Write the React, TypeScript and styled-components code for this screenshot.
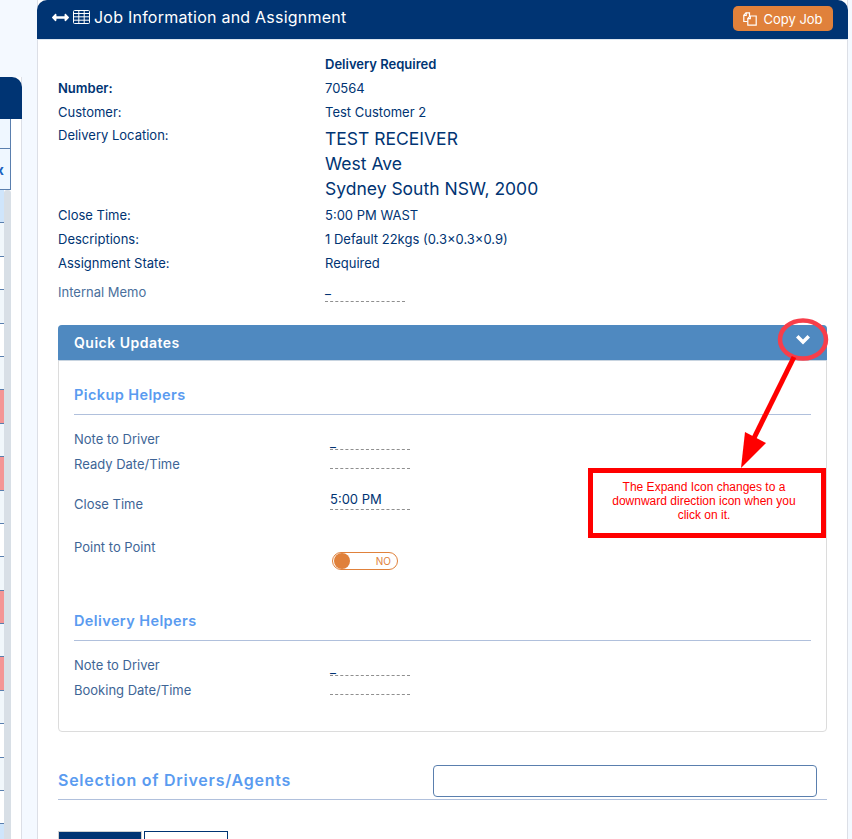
import styled, { createGlobalStyle } from 'styled-components';
import { FaArrowsAltH } from 'react-icons/fa';

const GlobalStyle = createGlobalStyle`
  html, body {
    margin: 0;
    padding: 0;
    height: 100%;
    overflow: hidden;
    background: #f4f9ff;
  }
  * { box-sizing: border-box; }
`;

const Page = styled.div`
  position: relative;
  display: flex;
  width: 852px;
  height: 839px;
  overflow: hidden;
  font-family: Inter, "Noto Sans", sans-serif;
  color: #003473;
`;

const SidePanel = styled.div`
  flex: 0 0 22px;
  margin-top: 77px;
  margin-right: 15px;
  background: #fff;
  border-right: 1px solid #dcdfe6;
`;

const SideHeader = styled.div`
  height: 42px;
  margin-right: -1px;
  background: #003473;
  border-top-right-radius: 10px;
`;

const SideHeadCell = styled.div<{ $height: number }>`
  display: flex;
  justify-content: flex-end;
  align-items: center;
  width: 11px;
  height: ${p => p.$height}px;
  padding-right: 6px;
  overflow: hidden;
  background: #eff7ff;
  border-right: 1px solid #5a7fae;
  border-bottom: 1px solid #5a7fae;
  font-size: 14px;
  font-weight: 700;
  color: #1a62c0;
  white-space: nowrap;
`;

const SideBody = styled.div`
  display: flex;
  width: 11px;
`;

const SideRows = styled.div`
  flex: 0 0 4px;
`;

const SideRow = styled.div<{ $kind: string }>`
  height: 33.4px;
  border-bottom: 1px solid #5a7fae;
  background: ${p =>
    p.$kind === 'blue' ? '#cfe5fb' : p.$kind === 'red' ? '#f49595' : p.$kind === 'tint' ? '#f1f7fb' : '#fff'};
`;

const SideScroll = styled.div`
  flex: 0 0 7px;
  height: 660px;
  background: #d8dfe6;
  border-radius: 3px 3px 0 0;
`;

const Panel = styled.div`
  flex: 0 0 811px;
  height: 900px;
  background: #fff;
  border-left: 1px solid #dcdfe6;
  border-right: 1px solid #dcdfe6;
`;

const PanelHeader = styled.div`
  display: flex;
  align-items: center;
  justify-content: space-between;
  height: 40px;
  margin: 0 -1px;
  padding: 0 15px 2px 15px;
  background: #003473;
  border-radius: 10px 10px 0 0;
  border-bottom: 1px solid #dde6f0;
  color: #fff;
`;

const PanelTitle = styled.div`
  display: flex;
  align-items: center;
  gap: 4px;
  margin-bottom: 3px;
  font-size: 16px;
  font-weight: 400;
  letter-spacing: 0.23px;
  svg { flex: none; }
`;

const CopyButton = styled.button`
  display: flex;
  align-items: center;
  justify-content: center;
  gap: 6px;
  width: 100px;
  height: 25px;
  padding: 0;
  border: none;
  border-radius: 5px;
  background: #e0813b;
  color: #fff;
  font-family: inherit;
  font-size: 13px;
`;

const PanelBody = styled.div`
  padding: 12px 20px 0 20px;
`;

const InfoGrid = styled.div`
  display: grid;
  grid-template-columns: 267px 1fr;
  font-size: 13px;
`;

const InfoLabel = styled.div<{ $bold?: boolean }>`
  min-height: 24px;
  line-height: 24px;
  font-weight: ${p => (p.$bold ? 600 : 400)};
`;

const LocationLabel = styled(InfoLabel)`
  margin-top: -1px;
`;

const InfoValue = styled.div<{ $bold?: boolean }>`
  min-height: 24px;
  line-height: 24px;
  font-weight: ${p => (p.$bold ? 600 : 400)};
`;

const AddressValue = styled.div`
  margin: 2px 0;
  font-size: 17.5px;
  line-height: 25px;
`;

const MemoLabel = styled.div`
  padding-top: 5px;
  line-height: 24px;
  font-size: 13px;
  color: #4a6f9c;
`;

const MemoValue = styled.div`
  width: 80px;
  height: 26px;
  margin-top: 1px;
  line-height: 27px;
  font-size: 13px;
  border-bottom: 1px dashed #8f8f8f;
`;

const Card = styled.div`
  height: 407px;
  margin-top: 21px;
  border: 1px solid #dcdcdc;
  border-radius: 4px;
`;

const CardHeader = styled.div`
  height: 36px;
  margin: -1px -1px 0 -1px;
  padding-left: 16px;
  line-height: 36px;
  background: #4f89c0;
  border-bottom: 1px solid #c8d4e0;
  border-radius: 4px 4px 0 0;
  color: #fff;
  font-size: 14px;
  font-weight: 600;
  letter-spacing: 0.5px;
`;

const CardBody = styled.div`
  padding: 0 15px;
`;

const SectionHeading = styled.div<{ $top: number }>`
  margin-top: ${p => p.$top}px;
  margin-bottom: 15px;
  padding-bottom: 9px;
  line-height: 20px;
  font-size: 14.5px;
  font-weight: 600;
  letter-spacing: 0.4px;
  color: #5a9bf0;
  border-bottom: 1px solid #b0c0dc;
`;

const FieldRow = styled.div<{ $height: number }>`
  display: grid;
  grid-template-columns: 256px 80px;
  height: ${p => p.$height}px;
  font-size: 13px;
`;

const FieldLabel = styled.div`
  line-height: 18px;
  color: #3e6596;
`;

const FieldInput = styled.div<{ $height: number; $tall?: boolean }>`
  display: flex;
  align-items: flex-end;
  height: ${p => p.$height}px;
  border-bottom: 1px dashed #8f8f8f;
  font-size: 13px;
  line-height: ${p => (p.$tall ? 20 : 14)}px;
`;

const Toggle = styled.div`
  display: flex;
  align-items: center;
  justify-content: space-between;
  width: 66px;
  height: 18px;
  margin: 14px 0 0 2px;
  padding: 0 6px 0 1px;
  background: #fff;
  border: 1px solid #e0813b;
  border-radius: 9px;
  color: #e0813b;
  font-size: 10px;
`;

const ToggleKnob = styled.span`
  width: 16px;
  height: 16px;
  border-radius: 50%;
  background: #e0813b;
`;

const SelectionRow = styled.div`
  display: flex;
  align-items: center;
  justify-content: space-between;
  height: 35px;
  margin-top: 33px;
  padding-right: 10px;
  border-bottom: 1px solid #b0c0dc;
`;

const SelectionTitle = styled.div`
  padding-bottom: 4px;
  font-size: 16px;
  font-weight: 600;
  letter-spacing: 0.75px;
  color: #5a9bf0;
`;

const SelectionInput = styled.div`
  width: 384px;
  height: 32px;
  margin-bottom: 2px;
  border: 1px solid #5a7fae;
  border-radius: 4px;
  background: #fff;
`;

const Tabs = styled.div`
  display: flex;
  gap: 2px;
  margin-top: 31px;
`;

const Tab = styled.div<{ $active?: boolean }>`
  width: 84px;
  height: 30px;
  background: ${p => (p.$active ? '#003473' : '#fff')};
  border: 1px solid ${p => (p.$active ? '#cfcfcf' : '#003473')};
`;

const CalloutArt = styled.svg`
  position: absolute;
  left: 0;
  top: 0;
  pointer-events: none;
`;

const CalloutBox = styled.div`
  position: absolute;
  left: 588px;
  top: 468px;
  display: flex;
  align-items: center;
  justify-content: center;
  width: 238px;
  height: 70px;
  padding: 0 21px 4px 15px;
  background: #fff;
  border: 5px solid #ff0000;
  color: #ff0000;
  font-family: "Liberation Sans", Arial, sans-serif;
  font-size: 12px;
  line-height: 14px;
  text-align: center;
`;

const rowKinds = [
  'blue', 'tint', 'white', 'tint', 'white', 'tint', 'red', 'tint', 'red', 'tint',
  'white', 'tint', 'red', 'tint', 'red', 'tint', 'white', 'tint', 'white', 'blue',
];

const CopyIcon = () => (
  <svg width="14" height="14" viewBox="0 0 14 14" fill="none" stroke="#fff" strokeWidth="1.2">
    <path d="M4.5 9.5H0.8V3.2L3 0.8H6.5V4" />
    <path d="M0.8 3.5H3.2V0.8" />
    <path d="M4.8 13.2V6.4L7 4H13.2V13.2Z" />
    <path d="M4.8 6.6H7.3V4" />
  </svg>
);

const TableIcon = () => (
  <svg width="17" height="14" viewBox="0 0 17 14" fill="none" stroke="#fff" strokeWidth="1">
    <rect x="0.5" y="0.5" width="16" height="13" rx="1" />
    <path d="M0.5 3.5H16.5M0.5 6.8H16.5M0.5 10.2H16.5M5.8 0.5V13.5M11.2 0.5V13.5" />
  </svg>
);

export default function App() {
  return (
    <>
      <GlobalStyle />
      <Page>
        <SidePanel>
          <SideHeader />
          <SideHeadCell $height={30} />
          <SideHeadCell $height={41}>Box</SideHeadCell>
          <SideBody>
            <SideRows>
              {rowKinds.map((kind, i) => (
                <SideRow key={i} $kind={kind} />
              ))}
            </SideRows>
            <SideScroll />
          </SideBody>
        </SidePanel>

        <Panel>
          <PanelHeader>
            <PanelTitle>
              <FaArrowsAltH size={17} />
              <TableIcon />
              <span>Job Information and Assignment</span>
            </PanelTitle>
            <CopyButton>
              <CopyIcon />
              Copy Job
            </CopyButton>
          </PanelHeader>

          <PanelBody>
            <InfoGrid>
              <InfoLabel />
              <InfoValue $bold>Delivery Required</InfoValue>
              <InfoLabel $bold>Number:</InfoLabel>
              <InfoValue>70564</InfoValue>
              <InfoLabel>Customer:</InfoLabel>
              <InfoValue>Test Customer 2</InfoValue>
              <LocationLabel>Delivery Location:</LocationLabel>
              <AddressValue>
                TEST RECEIVER
                <br />
                West Ave
                <br />
                Sydney South NSW, 2000
              </AddressValue>
              <InfoLabel>Close Time:</InfoLabel>
              <InfoValue>5:00 PM WAST</InfoValue>
              <InfoLabel>Descriptions:</InfoLabel>
              <InfoValue>1 Default 22kgs (0.3×0.3×0.9)</InfoValue>
              <InfoLabel>Assignment State:</InfoLabel>
              <InfoValue>Required</InfoValue>
              <MemoLabel>Internal Memo</MemoLabel>
              <MemoValue>_</MemoValue>
            </InfoGrid>

            <Card>
              <CardHeader>Quick Updates</CardHeader>
              <CardBody>
                <SectionHeading $top={24}>Pickup Helpers</SectionHeading>
                <FieldRow $height={25}>
                  <FieldLabel>Note to Driver</FieldLabel>
                  <FieldInput $height={20}>_</FieldInput>
                </FieldRow>
                <FieldRow $height={40}>
                  <FieldLabel>Ready Date/Time</FieldLabel>
                  <FieldInput $height={14} />
                </FieldRow>
                <FieldRow $height={43}>
                  <FieldLabel>Close Time</FieldLabel>
                  <FieldInput $height={15} $tall>5:00 PM</FieldInput>
                </FieldRow>
                <FieldRow $height={73}>
                  <FieldLabel>Point to Point</FieldLabel>
                  <Toggle>
                    <ToggleKnob />
                    NO
                  </Toggle>
                </FieldRow>
                <SectionHeading $top={0}>Delivery Helpers</SectionHeading>
                <FieldRow $height={25}>
                  <FieldLabel>Note to Driver</FieldLabel>
                  <FieldInput $height={20}>_</FieldInput>
                </FieldRow>
                <FieldRow $height={40}>
                  <FieldLabel>Booking Date/Time</FieldLabel>
                  <FieldInput $height={14} />
                </FieldRow>
              </CardBody>
            </Card>

            <SelectionRow>
              <SelectionTitle>Selection of Drivers/Agents</SelectionTitle>
              <SelectionInput />
            </SelectionRow>

            <Tabs>
              <Tab $active />
              <Tab />
            </Tabs>
          </PanelBody>
        </Panel>

        <CalloutArt width="852" height="839" viewBox="0 0 852 839">
          <polygon points="796,337.5 798.5,335 803,339.5 807.5,335 810,337.5 803,344.5" fill="#fff" />
          <ellipse cx="803" cy="339.5" rx="23" ry="19" fill="none" stroke="#f73e4a" strokeWidth="4.5" />
          <line x1="794" y1="357" x2="754" y2="438" stroke="#ff0000" strokeWidth="5" />
          <polygon points="741,468 745,432 766,443" fill="#ff0000" />
        </CalloutArt>
        <CalloutBox>The Expand Icon changes to a downward direction icon when you click on it.</CalloutBox>
      </Page>
    </>
  );
}
